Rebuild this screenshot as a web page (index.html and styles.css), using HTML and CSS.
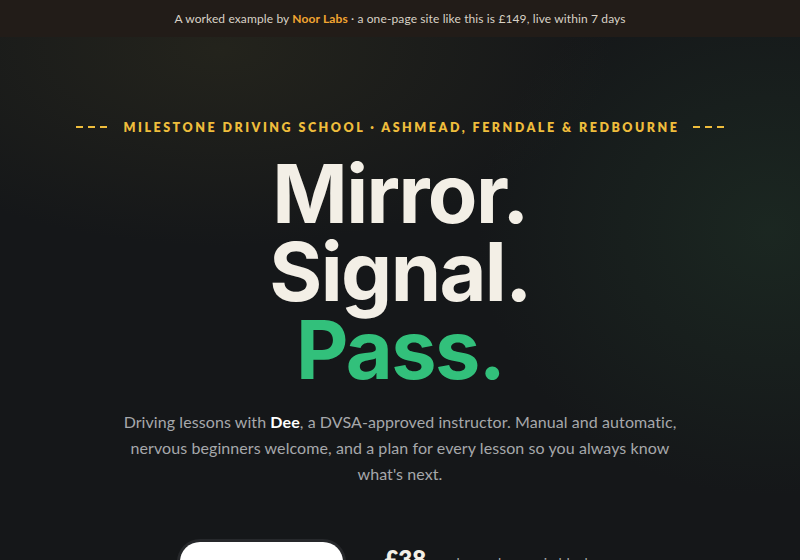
FILE: index.html
```html
<!DOCTYPE html>
<html lang="en">
<head>
<meta charset="utf-8">
<title>Milestone Driving School</title>
<link rel="stylesheet" href="styles.css">
</head>
<body>
<div class="topbar"><p class="topbar-text">A worked example by <b>Noor Labs</b> · a one-page site like this is £149, live within 7 days</p></div>
<main class="hero">
  <p class="eyebrow"><span class="dash"></span><span class="dash"></span><span class="dash"></span><span class="eyebrow-text">Milestone Driving School · Ashmead, Ferndale &amp; Redbourne</span><span class="dash"></span><span class="dash"></span><span class="dash"></span></p>
  <h1 class="headline">Mirror.<br>Signal.<br><span class="green">Pass.</span></h1>
  <p class="lede">Driving lessons with <strong>Dee</strong>, a DVSA-approved instructor. Manual and automatic, nervous beginners welcome, and a plan for every lesson so you always know what's next.</p>
  <div class="cta-row">
    <a class="btn" href="#">Book a lesson</a>
    <div class="price"><span class="amount">£38</span><span class="per">an hour, cheaper in blocks</span></div>
  </div>
</main>
</body>
</html>
```
FILE: styles.css
```css
* { box-sizing: border-box; }
html, body { margin: 0; padding: 0; }
body {
  width: 800px;
  height: 560px;
  overflow: hidden;
  font-family: "Lato", "Noto Sans", sans-serif;
  background:
    radial-gradient(ellipse 560px 280px at 220px 50px, rgba(62,58,34,0.35), transparent 70%),
    radial-gradient(ellipse 420px 380px at 770px 230px, rgba(38,68,48,0.35), transparent 70%),
    #151719;
  color: #f3efe6;
}
.topbar {
  height: 37px;
  background: #221c18;
  display: flex;
  align-items: center;
  justify-content: center;
}
.topbar-text {
  margin: 0;
  color: #d9d2c6;
  font-size: 12px;
  letter-spacing: 0.01em;
}
.topbar-text b { color: #f2a531; font-weight: 700; }
.hero {
  display: flex;
  flex-direction: column;
  align-items: center;
  padding-top: 82px;
}
.eyebrow {
  margin: 0;
  display: flex;
  align-items: center;
  gap: 5px;
  color: #efbd3c;
  font-size: 12.5px;
  font-weight: 800;
  letter-spacing: 0.2em;
  text-transform: uppercase;
  height: 16px;
}
.dash {
  display: inline-block;
  width: 7px;
  height: 2px;
  background: #efbd3c;
}
.eyebrow-text { margin: 0 9px 0 12px; }
.headline {
  margin: 20px 0 0;
  font-family: "Inter", "Roboto", sans-serif;
  font-weight: 700;
  font-size: 81px;
  line-height: 78px;
  letter-spacing: -0.02em;
  text-align: center;
  color: #f3efe6;
}
.green { color: #32c07b; }
.lede {
  margin: 20px 0 0;
  width: 566px;
  text-align: center;
  font-size: 16px;
  line-height: 26px;
  letter-spacing: 0.005em;
  color: #a6a8ab;
}
.lede strong { color: #ffffff; font-weight: 700; }
.cta-row {
  margin-top: 55px;
  display: flex;
  align-items: flex-start;
  gap: 41px;
  margin-left: -22px;
}
.btn {
  display: block;
  width: 163px;
  height: 52px;
  border-radius: 20px;
  background: #ffffff;
  box-shadow: 0 0 0 3px #26282b;
  color: #151719;
  text-decoration: none;
  font-weight: 700;
  text-align: center;
  padding-top: 20px;
}
.price { display: flex; align-items: baseline; gap: 12px; padding-top: 2px; }
.amount { font-size: 24px; font-weight: 800; color: #f3efe6; }
.per { font-size: 14px; color: #a6a8ab; }
```
